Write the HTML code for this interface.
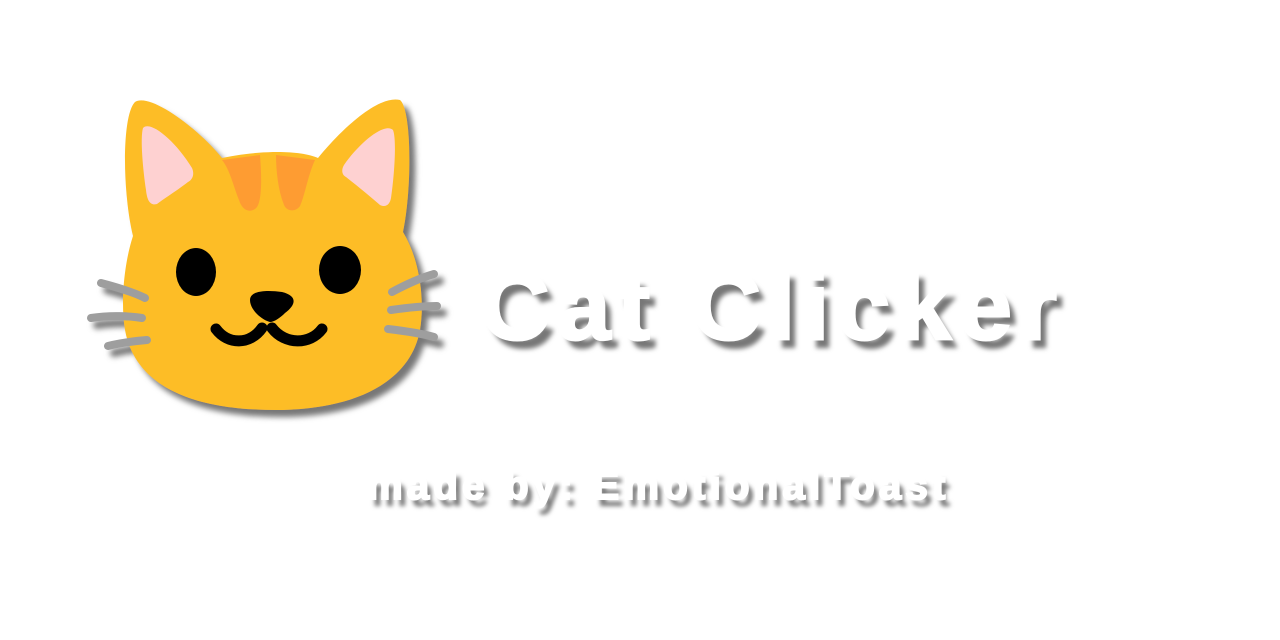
<!DOCTYPE html>
<html><head><meta charset="utf-8"><style>
html,body{margin:0;padding:0;background:#fff;width:1280px;height:640px;overflow:hidden;}
.t{position:absolute;color:#fff;font-family:"Liberation Sans",sans-serif;font-weight:bold;white-space:nowrap;-webkit-text-stroke:3px #fff;}
#title{left:480px;top:252px;font-size:96px;letter-spacing:7.5px;text-shadow:7px 9px 5px #777;}
#sub{left:367px;top:464px;font-size:40px;letter-spacing:4.3px;text-shadow:5px 7px 4px #777;-webkit-text-stroke:2px #fff;}
</style></head><body>
<svg width="1280" height="640" style="position:absolute;left:0;top:0">
<defs><filter id="sh" x="-10%" y="-10%" width="130%" height="130%"><feDropShadow dx="6" dy="7" stdDeviation="3" flood-color="#777"/></filter></defs>
<g filter="url(#sh)">
<path d="M135 102 C150 92 200 130 222 158 C260 150 300 150 318 158 C345 125 380 95 400 100 C412 110 412 190 403 232 C420 260 425 300 420 330 C410 385 350 410 275 410 C190 410 135 385 125 330 C120 300 125 260 133 236 C122 190 122 115 135 102 Z" fill="#fdbd27"/>
<path d="M143 128 C150 120 175 140 192 168 C195 175 192 180 188 182 C175 192 162 200 157 204 C150 206 147 200 146 190 C143 170 140 138 143 128 Z" fill="#fed1d1"/>
<path d="M393 130 C385 122 360 142 344 165 C341 170 342 175 346 177 C360 188 372 198 380 205 C386 208 390 204 391 198 C394 178 397 140 393 130 Z" fill="#fed1d1"/>
<path d="M222 160 L260 155 C262 180 262 205 255 209 C249 213 242 210 239 200 C233 185 230 170 222 160 Z" fill="#fe9c33"/>
<path d="M276 155 L315 160 C308 175 305 195 300 206 C296 212 287 212 284 205 C278 190 276 170 276 155 Z" fill="#fe9c33"/>
<ellipse cx="196" cy="272" rx="20" ry="24"/>
<ellipse cx="340" cy="270" rx="21" ry="24"/>
<path d="M250 300 C250 290 268 290 282 292 C298 296 296 305 285 313 C280 318 274 322 270 322 C262 320 250 310 250 300 Z"/>
<path d="M216 329 C228 345 250 345 262 328 M272 328 C285 345 310 345 322 329" stroke="#000" stroke-width="11" fill="none" stroke-linecap="round"/>
<g stroke="#9e9e9e" stroke-width="8" stroke-linecap="round" fill="none">
<path d="M101 283 C120 288 135 293 145 298"/><path d="M91 318 C110 315 130 316 142 318"/><path d="M108 346 C120 343 135 341 147 340"/>
<path d="M392 292 C405 285 420 278 434 274"/><path d="M391 310 C405 308 420 306 437 306"/><path d="M388 329 C405 331 420 333 434 337"/>
</g>
</g>
</svg>
<div class="t" id="title">Cat Clicker</div>
<div class="t" id="sub">made by: EmotionalToast</div>
</body></html>
